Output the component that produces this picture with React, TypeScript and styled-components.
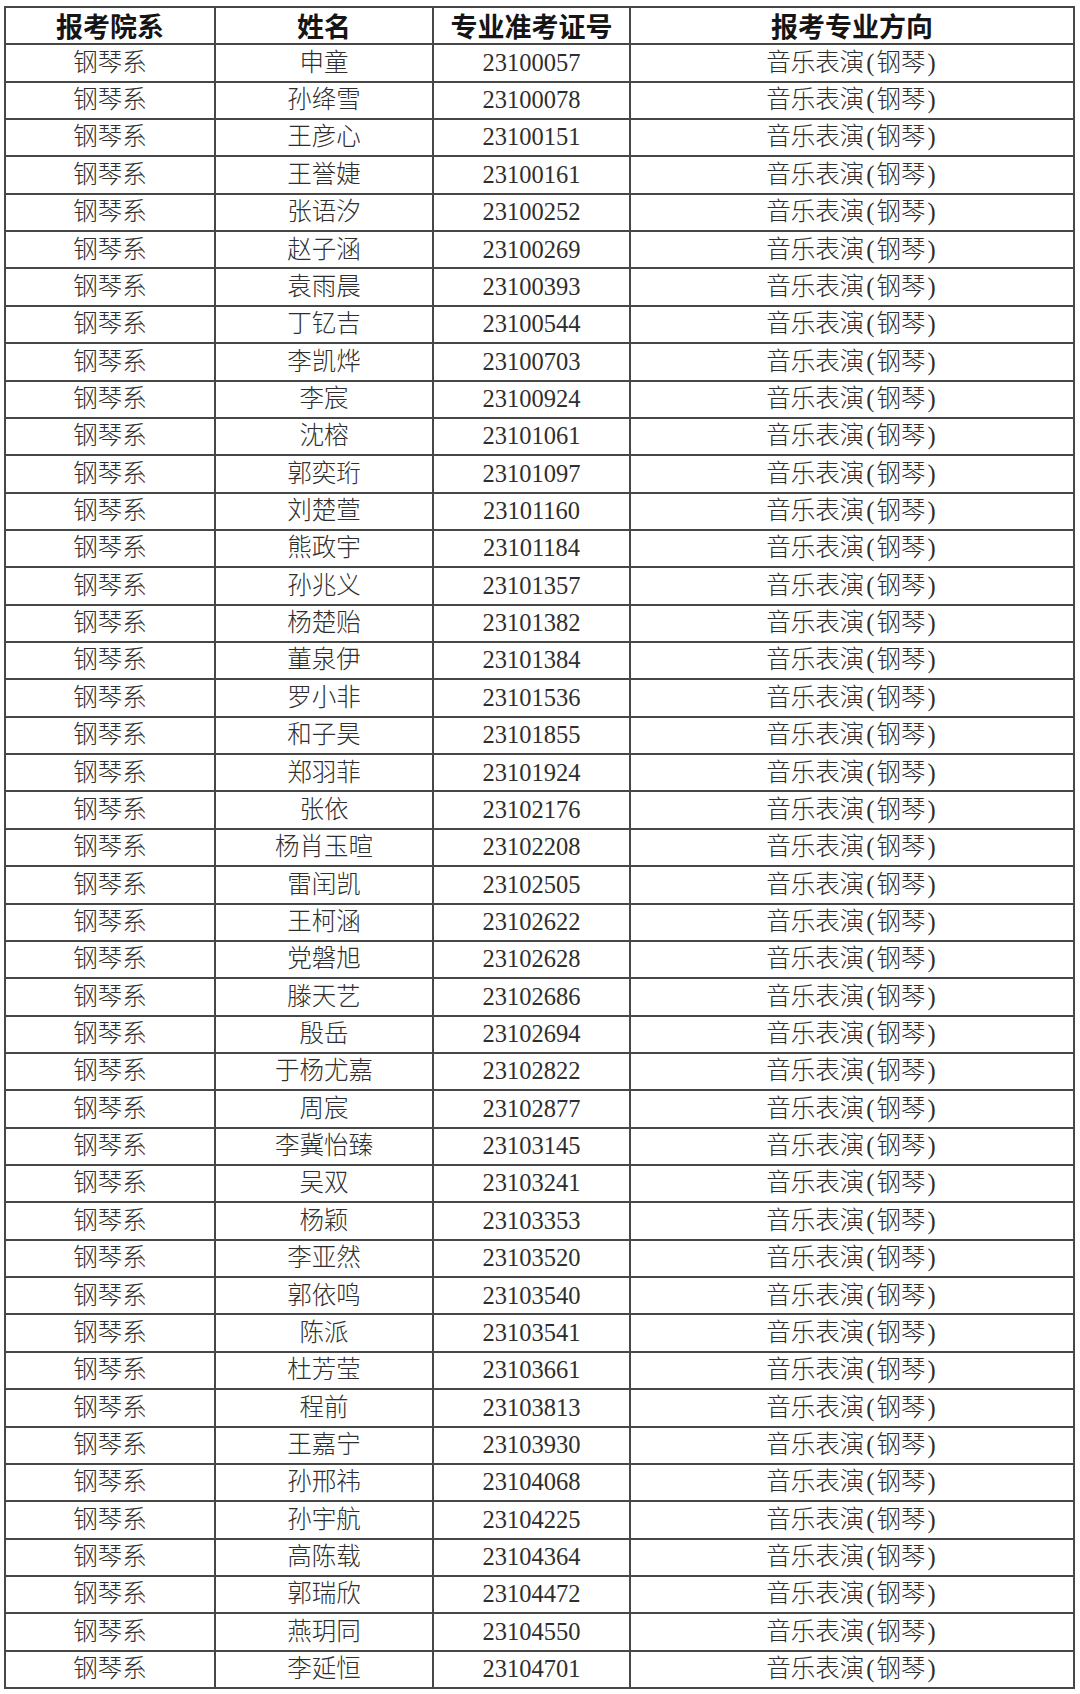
import styled, { createGlobalStyle } from 'styled-components'

const GlobalStyle = createGlobalStyle`
  html, body {
    margin: 0;
    padding: 0;
    background: #ffffff;
  }
`

const Page = styled.div`
  width: 1080px;
  height: 1694px;
  box-sizing: border-box;
  padding: 6px 0 0 4px;
  background: #ffffff;
`

const Table = styled.div`
  display: grid;
  grid-template-columns: 208px 216px 195px 442px;
  grid-template-rows: repeat(45, 1fr);
  gap: 2px;
  padding: 2px;
  width: 1071px;
  height: 1683px;
  box-sizing: border-box;
  background: #474747;
`

const Cell = styled.div<{ $head?: boolean }>`
  display: flex;
  align-items: center;
  justify-content: center;
  background: #ffffff;
  white-space: nowrap;
  font-family: ${({ $head }) =>
    $head
      ? '"Noto Sans CJK SC", sans-serif'
      : '"Liberation Serif", "Noto Sans CJK SC", serif'};
  font-size: ${({ $head }) => ($head ? '27px' : '24.5px')};
  font-weight: ${({ $head }) => ($head ? 700 : 300)};
  color: ${({ $head }) => ($head ? '#151515' : '#2e2e2e')};
  line-height: 1;
`

// SimSun-style half-width brackets sit in a wider box than Liberation Serif's
const Paren = styled.span`
  font-family: "Liberation Serif", serif;
  padding: 0 2px;
`

const headers = ['报考院系', '姓名', '专业准考证号', '报考专业方向']

const students: [string, string][] = [
  ['申童', '23100057'],
  ['孙绛雪', '23100078'],
  ['王彦心', '23100151'],
  ['王誉婕', '23100161'],
  ['张语汐', '23100252'],
  ['赵子涵', '23100269'],
  ['袁雨晨', '23100393'],
  ['丁钇吉', '23100544'],
  ['李凯烨', '23100703'],
  ['李宸', '23100924'],
  ['沈榕', '23101061'],
  ['郭奕珩', '23101097'],
  ['刘楚萱', '23101160'],
  ['熊政宇', '23101184'],
  ['孙兆义', '23101357'],
  ['杨楚贻', '23101382'],
  ['董泉伊', '23101384'],
  ['罗小非', '23101536'],
  ['和子昊', '23101855'],
  ['郑羽菲', '23101924'],
  ['张依', '23102176'],
  ['杨肖玉暄', '23102208'],
  ['雷闰凯', '23102505'],
  ['王柯涵', '23102622'],
  ['党磐旭', '23102628'],
  ['滕天艺', '23102686'],
  ['殷岳', '23102694'],
  ['于杨尤嘉', '23102822'],
  ['周宸', '23102877'],
  ['李冀怡臻', '23103145'],
  ['吴双', '23103241'],
  ['杨颖', '23103353'],
  ['李亚然', '23103520'],
  ['郭依鸣', '23103540'],
  ['陈派', '23103541'],
  ['杜芳莹', '23103661'],
  ['程前', '23103813'],
  ['王嘉宁', '23103930'],
  ['孙邢祎', '23104068'],
  ['孙宇航', '23104225'],
  ['高陈载', '23104364'],
  ['郭瑞欣', '23104472'],
  ['燕玥同', '23104550'],
  ['李延恒', '23104701'],
]

export default function App() {
  return (
    <Page>
      <GlobalStyle />
      <Table>
        {headers.map((h) => (
          <Cell key={h} $head>
            {h}
          </Cell>
        ))}
        {students.map(([name, id]) => [
          <Cell key={id + 'd'}>钢琴系</Cell>,
          <Cell key={id + 'n'}>{name}</Cell>,
          <Cell key={id}>{id}</Cell>,
          <Cell key={id + 'm'}>
            音乐表演<Paren>(</Paren>钢琴<Paren>)</Paren>
          </Cell>,
        ])}
      </Table>
    </Page>
  )
}
